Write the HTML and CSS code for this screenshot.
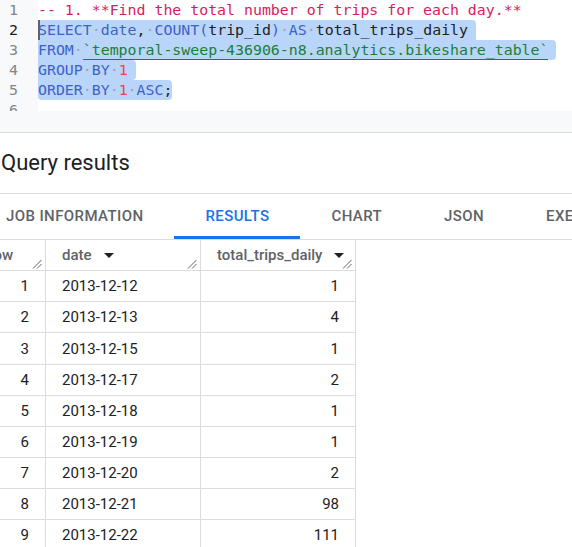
FILE: index.html
```html
<!DOCTYPE html>
<html>
<head>
<meta charset="utf-8">
<link rel="stylesheet" href="styles.css">
</head>
<body>
<div class="page">
  <div class="editor">
    <div class="gutter">
      <div class="ln">1</div>
      <div class="ln active">2</div>
      <div class="ln">3</div>
      <div class="ln">4</div>
      <div class="ln">5</div>
      <div class="ln">6</div>
    </div>
    <div class="code">
      <div class="line"><span class="cm">-- 1. **Find the total number of trips for each day.**</span></div>
      <div class="line"><span class="sel sel-top"><span class="kw">SELECT</span><span class="ws">·</span><span class="kw">date</span><span class="id">,</span><span class="ws">·</span><span class="kw">COUNT</span><span class="kw">(</span><span class="id">trip_id</span><span class="kw">)</span><span class="ws">·</span><span class="kw">AS</span><span class="ws">·</span><span class="id">total_trips_daily</span></span><span class="cursor"></span></div>
      <div class="line"><span class="sel sel-mid"><span class="kw">FROM</span><span class="ws">·</span><span class="str">`temporal-sweep-436906-n8.analytics.bikeshare_table`</span></span></div>
      <div class="line"><span class="sel sel-mid"><span class="kw">GROUP</span><span class="ws">·</span><span class="kw">BY</span><span class="ws">·</span><span class="num">1</span></span></div>
      <div class="line"><span class="sel sel-end"><span class="kw">ORDER</span><span class="ws">·</span><span class="kw">BY</span><span class="ws">·</span><span class="num">1</span><span class="ws">·</span><span class="kw">ASC</span><span class="id">;</span></span></div>
      <div class="line"></div>
    </div>
  </div>
  <div class="editor-foot"></div>

  <section class="results">
    <h2 class="results-title">Query results</h2>
    <div class="tabs">
      <div class="tab">JOB INFORMATION</div>
      <div class="tab tab-active">RESULTS</div>
      <div class="tab">CHART</div>
      <div class="tab">JSON</div>
      <div class="tab">EXECUTION DETAILS</div>
      <div class="tab">EXECUTION GRAPH</div>
    </div>
    <div class="grid">
      <div class="hcell hrow">Row<svg class="grip" viewBox="0 0 10 10" width="10" height="10"><path d="M1 9.5L9.5 1M5 9.5L9.5 5" /></svg></div>
      <div class="hcell">date<span class="arrow"></span><svg class="grip" viewBox="0 0 10 10" width="10" height="10"><path d="M1 9.5L9.5 1M5 9.5L9.5 5" /></svg></div>
      <div class="hcell">total_trips_daily<span class="arrow"></span><svg class="grip" viewBox="0 0 10 10" width="10" height="10"><path d="M1 9.5L9.5 1M5 9.5L9.5 5" /></svg></div>

      <div class="cell rn">1</div><div class="cell">2013-12-12</div><div class="cell val">1</div>
      <div class="cell rn">2</div><div class="cell">2013-12-13</div><div class="cell val">4</div>
      <div class="cell rn">3</div><div class="cell">2013-12-15</div><div class="cell val">1</div>
      <div class="cell rn">4</div><div class="cell">2013-12-17</div><div class="cell val">2</div>
      <div class="cell rn">5</div><div class="cell">2013-12-18</div><div class="cell val">1</div>
      <div class="cell rn">6</div><div class="cell">2013-12-19</div><div class="cell val">1</div>
      <div class="cell rn">7</div><div class="cell">2013-12-20</div><div class="cell val">2</div>
      <div class="cell rn">8</div><div class="cell">2013-12-21</div><div class="cell val">98</div>
      <div class="cell rn">9</div><div class="cell">2013-12-22</div><div class="cell val">111</div>
      <div class="cell rn">10</div><div class="cell">2013-12-23</div><div class="cell val">95</div>
    </div>
  </section>
</div>
</body>
</html>
```
FILE: styles.css
```css
html, body {
  margin: 0;
  padding: 0;
  background: #ffffff;
  overflow: hidden;
}
.page {
  width: 572px;
  height: 547px;
  overflow: hidden;
  font-family: Roboto, "Noto Sans", sans-serif;
  color: #202124;
}

/* editor */
.editor {
  display: flex;
  height: 111px;
  overflow: hidden;
  background: #ffffff;
}
.gutter {
  width: 38px;
  flex: none;
  background: #f8f9fa;
  font-family: "DejaVu Sans Mono", monospace;
  font-size: 14.9px;
}
.ln {
  height: 20px;
  line-height: 20px;
  text-align: right;
  padding-right: 20px;
  color: #80868b;
}
.ln.active { color: #202124; }
.code {
  flex: 1;
  font-family: "DejaVu Sans Mono", monospace;
  font-size: 14.88px;
}
.line {
  position: relative;
  height: 20px;
  line-height: 20px;
  white-space: pre;
}
.sel {
  display: inline-block;
  height: 20px;
  background: #bad5fa;
  vertical-align: top;
}
.sel-top { padding-right: 8px; border-radius: 0 4px 0 0; }
.sel-mid { padding-right: 8px; border-radius: 0 4px 4px 0; }
.sel-end { border-radius: 0 4px 4px 4px; }
.cursor {
  position: absolute;
  left: 0;
  top: 0;
  width: 2px;
  height: 20px;
  background: #5f6368;
}
.cm { color: #d81b60; }
.kw { color: #3f62c8; }
.id { color: #202124; }
.num { color: #e8453c; }
.str {
  color: #188038;
  display: inline-block;
  height: 20px;
  vertical-align: top;
  box-shadow: inset 0 -1px 0 #188038;
}
.ws { color: #9aa3b5; }
.editor-foot {
  height: 21px;
  background: #f8f9fa;
  border-bottom: 1px solid #dadce0;
}

/* results */
.results-title {
  margin: 0;
  height: 60px;
  line-height: 60px;
  padding-left: 1px;
  font-size: 22px;
  font-weight: 400;
  color: #202124;
  border-bottom: 1px solid #dadce0;
}
.tabs {
  display: flex;
  margin-left: -25px;
  height: 45px;
  border-bottom: 1px solid #dadce0;
  white-space: nowrap;
}
.tab {
  flex: none;
  padding: 0 31px;
  line-height: 45px;
  font-size: 15px;
  font-weight: 500;
  letter-spacing: 0.4px;
  color: #5f6368;
}
.tab-active {
  color: #1a73e8;
  box-shadow: inset 0 -3px 0 #1a73e8;
}

.grid {
  display: grid;
  grid-template-columns: 78px 155px 155px;
  grid-auto-rows: 31.17px;
  margin-left: -32px;
  width: 388px;
}
.hcell, .cell {
  position: relative;
  box-sizing: border-box;
  border-right: 1px solid #dadce0;
  border-bottom: 1px solid #dadce0;
  display: flex;
  align-items: center;
  padding: 0 16px;
  font-size: 15px;
  white-space: nowrap;
}
.hcell {
  height: 31px;
  font-weight: 500;
  color: #5f6368;
}
.arrow {
  width: 0;
  height: 0;
  margin-left: 12px;
  border-left: 5px solid transparent;
  border-right: 5px solid transparent;
  border-top: 5px solid #202124;
  margin-top: 1px;
}
.grip {
  position: absolute;
  right: 3px;
  bottom: 1px;
  fill: none;
  stroke: #5f6368;
  stroke-width: 1;
}
.cell {
  color: #202124;
}
.rn {
  justify-content: flex-end;
  background: #ffffff;
}
.val {
  justify-content: flex-end;
}
```
